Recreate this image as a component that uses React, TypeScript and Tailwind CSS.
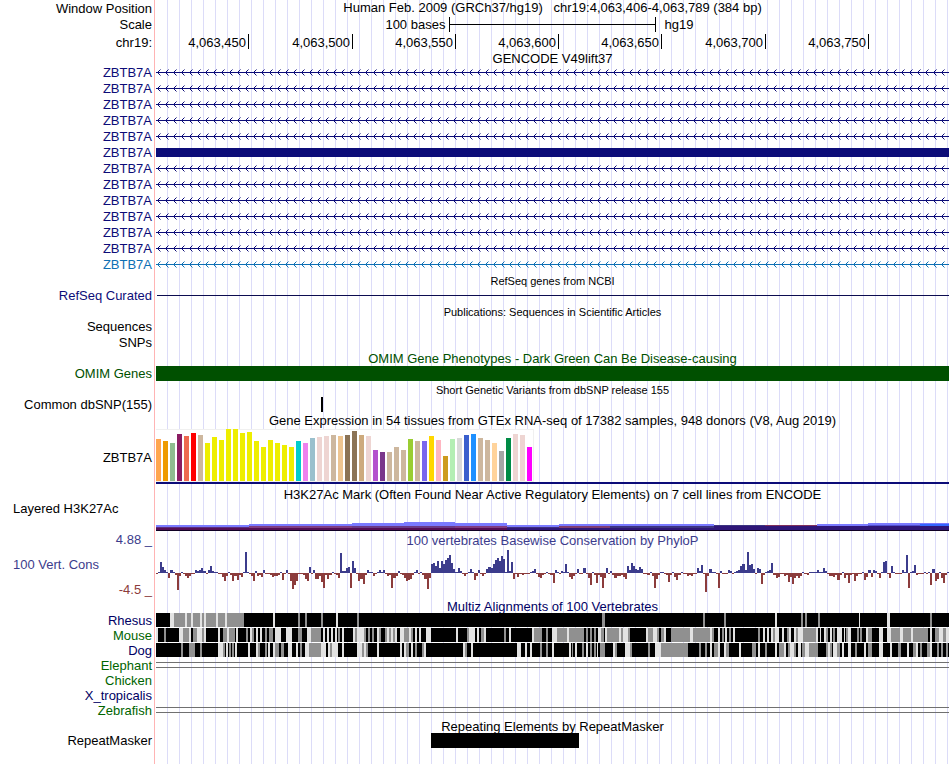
import type { ReactNode } from "react";

type Box = [x: number, y: number, w: number, h: number, color: string];

const PLOT_WIDTH = 793;
const NAVY = "#0c0c78";

const genes = [
  ...Array.from({ length: 5 }, () => ({ kind: "intron", color: NAVY })),
  { kind: "exon", color: NAVY },
  ...Array.from({ length: 6 }, () => ({ kind: "intron", color: NAVY })),
  { kind: "intron", color: "#0e70b4" },
];

const ticks = ["4,063,450", "4,063,500", "4,063,550", "4,063,600", "4,063,650", "4,063,700", "4,063,750"];

const TAN = "#cdb79e";
const YELLOW = "#eeee00";
const ROSE = "#eed5d2";

const tissues: [number, string][] = [
  [42, "#ffa54f"], [40, "#ee9a00"], [38, "#8fbc8f"], [47, "#8b1c62"], [45, "#ee6a50"], [48, "#ff0000"], [46, TAN],
  [38, YELLOW], [44, YELLOW], [41, YELLOW], [52, YELLOW], [52, YELLOW], [48, YELLOW], [49, YELLOW], [40, YELLOW],
  [34, YELLOW], [41, YELLOW], [38, YELLOW], [36, YELLOW], [34, YELLOW], [40, "#00cdcd"], [38, "#ee82ee"],
  [43, "#9ac0cd"], [44, ROSE], [45, ROSE], [46, TAN], [45, "#eec591"], [46, "#8b7355"], [50, "#8b7355"],
  [46, "#cdaa7d"], [45, ROSE], [31, "#b452cd"], [29, "#7a378b"], [29, TAN], [34, TAN], [31, TAN], [42, "#9acd32"],
  [40, TAN], [40, "#7a67ee"], [45, "#ffd700"], [41, "#ffb6c1"], [25, "#cd9b1d"], [42, "#b4eeb4"], [43, "#d9d9d9"],
  [46, "#3a5fcd"], [47, "#1e90ff"], [43, TAN], [41, TAN], [38, "#ffd39b"], [30, "#a6a6a6"], [43, "#008b45"],
  [47, ROSE], [46, ROSE], [34, "#ff00ff"],
];

const histone: Box[] = [
  [0, 3, 93, 3, "#7a7aff"],
  [93, 2, 103, 3, "#7a7aff"],
  [196, 1, 52, 4, "#7a7aff"],
  [248, 0, 51, 5, "#7a7aff"],
  [299, 1, 52, 4, "#7a7aff"],
  [351, 3, 52, 2, "#7a7aff"],
  [403, 2, 155, 2, "#7a7aff"],
  [661, 2, 51, 2, "#7a7aff"],
  [712, 1, 81, 2, "#7a7aff"],
  [0, 5, 93, 1, "#5c2d7c"],
  [93, 4, 103, 2, "#803c80"],
  [196, 4, 103, 2, "#6a3a86"],
  [299, 4, 52, 2, "#803c80"],
  [351, 5, 52, 1, "#40307c"],
  [403, 4, 51, 2, "#803c70"],
  [454, 4, 104, 2, "#3c3480"],
  [558, 3, 51, 2, "#3c3480"],
  [609, 3, 52, 1, "#80305c"],
  [661, 4, 51, 1, "#80305c"],
  [712, 3, 52, 2, "#5050d0"],
  [764, 2, 29, 2, "#3366ff"],
  [558, 4, 235, 2, "#2f1678"],
  [0, 6, 351, 2, "#540c54"],
  [351, 6, 442, 2, "#2f1678"],
  [0, 8, 793, 1, "#100024"],
];

const phyloP = [
  -1, 1, 11, 6, 3, 1, -5, 3, 1, -2, -17, -3, 1, -1, -3, -5, -3, -1, -1, 3, 2, 3, 5, 2, -1, 3, 7, 2, 1, 1, -1, -1,
  -4, -8, -3, 1, -2, -8, -3, -7, -2, -4, 1, 21, 1, -1, -3, -8, 2, -3, -2, -4, 3, -1, -1, -2, -4, -3, -3, -2, 1, -7,
  -1, 3, -1, -8, -16, -12, -8, -1, -1, -2, -6, -8, 6, -1, 3, -6, -6, -3, -9, -15, -2, -6, -2, 1, -1, -2, -5, 20, 2,
  2, 5, 6, -15, 12, 5, -1, -8, -6, -11, -2, 3, 1, 1, -3, -1, 1, 3, 1, 3, -1, -3, -2, -15, -5, -3, 2, -1, -2, -5,
  -8, -7, -6, -2, 1, 3, -1, 1, -2, -6, -16, -5, 9, 10, 7, 12, 5, 12, 9, 13, 15, 18, 10, 4, 1, 5, 2, -1, -3, -1, 1,
  4, 1, -7, -3, 3, -1, -3, -1, 4, 6, 5, 9, 13, 15, 12, 17, 14, 1, 23, 2, 11, -6, -1, -4, -1, -2, -1, -1, -1, 1, 2,
  4, -1, -4, -5, -2, -1, 1, -1, -2, -10, 3, 1, -1, 2, 1, 9, 1, -4, -6, -3, -1, 4, -1, -1, 5, -1, -5, -12, 1, -2,
  -10, -2, -4, -15, -5, 5, -1, 2, -2, -5, -3, -3, -2, -4, -6, 7, 3, 10, 7, 4, 3, 6, 4, -1, -1, -2, 1, -3, -15, -6,
  -2, 1, 1, -1, -2, -9, -2, 1, -4, -7, -2, 1, -1, -1, -3, -2, -3, -1, -1, 5, 2, 8, -1, -19, -3, 4, 1, 1, -1, -15,
  2, -1, -1, -1, 3, 2, -1, 1, 2, 3, 7, 9, 3, 21, 8, 9, 4, -1, 5, 4, -11, -2, 1, 2, 3, 10, -2, -5, -4, -1, -1, -3,
  -2, -9, -4, -11, -5, -3, -5, -3, 1, -1, -2, 1, 1, 1, 1, 3, 1, 1, 5, 2, -1, -3, -3, -4, -2, -7, -2, 1, -5, -2,
  -10, -2, -1, -8, -3, -1, -1, 1, -7, -4, 3, -4, 3, 2, -1, -5, 1, 11, 12, -1, -5, 7, 1, -1, -1, -1, 3, 1, 18, -15,
  1, 2, 8, -2, -1, -1, -1, 1, -1, 1, -12, 4, -8, -6, 1, -5, -10, -2, 1,
];

const K = "#000000";
const G = "#909090";
const L = "#e2e2e2";

type Run = [x: number, w: number, color: string];

const rhesus: Run[] = [
  [14, 4, L], [18, 70, G], [29, 2, L], [35, 2, L], [44, 2, L], [48, 2, L], [60, 2, L], [69, 2, L], [117, 2, L],
  [142, 2, G], [149, 2, G], [165, 2, G], [180, 2, L], [201, 2, G], [446, 3, G], [547, 2, G], [568, 2, G],
  [619, 2, L], [645, 2, G], [649, 2, G], [662, 2, G], [703, 1, L], [731, 3, L], [774, 2, G],
];

const mouse: Run[] = [
  [0, 2, L], [8, 2, G], [23, 4, L], [27, 6, G], [33, 2, L], [37, 4, G], [41, 5, L], [46, 2, G], [48, 2, L],
  [62, 2, L], [67, 4, G], [71, 2, L], [73, 6, G], [80, 2, L], [90, 2, G], [94, 2, L], [96, 2, G], [100, 2, L],
  [104, 2, L], [109, 2, G], [113, 4, G], [119, 6, L], [130, 6, L], [142, 4, G], [151, 4, L], [155, 10, G],
  [167, 2, L], [171, 2, L], [175, 2, L], [179, 2, L], [182, 2, G], [186, 2, L], [197, 2, L], [199, 2, G],
  [201, 7, L], [208, 2, G], [212, 2, G], [216, 2, G], [221, 2, L], [223, 2, G], [229, 2, G], [231, 2, L],
  [233, 2, G], [235, 2, L], [237, 2, G], [239, 2, L], [244, 4, L], [248, 5, G], [253, 2, L], [255, 2, G],
  [259, 2, L], [263, 2, L], [270, 5, L], [300, 2, L], [311, 2, G], [313, 6, L], [321, 2, L], [325, 3, G],
  [328, 2, L], [348, 2, G], [353, 2, L], [376, 2, L], [378, 8, G], [390, 2, G], [396, 5, L], [401, 10, G],
  [411, 2, L], [413, 15, G], [430, 2, G], [434, 2, G], [438, 2, G], [442, 3, L], [445, 3, G], [449, 2, L],
  [451, 12, G], [463, 2, L], [465, 2, G], [467, 5, L], [472, 2, G], [490, 2, L], [492, 5, G], [497, 4, L],
  [501, 2, G], [505, 3, G], [508, 2, L], [515, 19, G], [534, 3, L], [537, 17, G], [554, 2, L], [556, 2, G],
  [562, 2, L], [566, 2, G], [569, 2, L], [573, 2, G], [577, 2, L], [602, 2, G], [607, 2, L], [611, 2, L],
  [615, 2, L], [617, 2, G], [619, 4, L], [626, 2, L], [631, 2, G], [633, 2, L], [638, 2, L], [640, 2, G],
  [642, 5, L], [647, 13, G], [660, 2, L], [664, 1, L], [668, 2, L], [670, 2, G], [674, 2, L], [677, 2, G],
  [681, 5, L], [688, 1, L], [690, 2, G], [692, 3, L], [701, 2, G], [704, 2, G], [710, 2, L], [712, 4, G],
  [723, 4, L], [731, 4, L], [735, 9, G], [744, 3, L], [747, 8, G], [755, 2, L], [757, 15, G], [774, 2, L],
  [779, 4, G], [783, 4, L], [787, 3, G], [790, 3, L],
];

const dog: Run[] = [
  [25, 2, G], [33, 6, G], [44, 2, G], [62, 5, L], [67, 2, G], [70, 2, L], [73, 2, G], [76, 2, G], [79, 2, L],
  [92, 2, L], [100, 2, L], [102, 2, G], [109, 2, G], [112, 2, L], [117, 2, L], [119, 4, G], [125, 3, G],
  [132, 4, L], [140, 2, L], [144, 2, G], [149, 4, L], [153, 12, G], [165, 5, L], [172, 2, L], [174, 2, G],
  [176, 6, L], [186, 2, L], [201, 5, L], [206, 2, G], [208, 2, L], [210, 2, G], [221, 2, L], [244, 2, L],
  [248, 2, L], [250, 3, G], [255, 2, L], [259, 2, G], [266, 2, G], [268, 2, L], [307, 2, L], [309, 2, G],
  [315, 2, L], [361, 4, L], [369, 2, L], [374, 2, L], [384, 2, G], [390, 2, G], [396, 2, L], [413, 2, L],
  [416, 1, G], [419, 2, L], [426, 2, G], [430, 2, L], [434, 2, G], [438, 2, G], [441, 1, L], [444, 2, G],
  [446, 3, G], [457, 2, L], [459, 2, G], [469, 5, L], [474, 2, G], [492, 2, G], [499, 6, L], [505, 27, G],
  [543, 2, G], [549, 2, G], [554, 2, L], [558, 4, G], [562, 2, L], [568, 2, L], [570, 3, G], [583, 2, L],
  [596, 4, G], [602, 2, L], [609, 2, G], [619, 2, L], [623, 5, G], [628, 2, L], [632, 2, G], [634, 4, L],
  [638, 2, G], [642, 3, L], [646, 3, G], [649, 4, L], [653, 9, G], [670, 2, G], [672, 2, L], [674, 2, G],
  [677, 4, L], [681, 3, G], [686, 2, L], [692, 3, L], [699, 2, G], [708, 2, L], [712, 4, G], [723, 4, L],
  [734, 2, L], [742, 3, G], [751, 2, L], [757, 3, G], [760, 2, L], [764, 2, G], [771, 3, G], [774, 2, L],
  [781, 2, G], [785, 2, G], [790, 2, G],
];

const species: { name: string; tone: string; runs?: Run[]; bridge?: boolean }[] = [
  { name: "Rhesus", tone: "text-[#000064]", runs: rhesus },
  { name: "Mouse", tone: "text-[#006400]", runs: mouse },
  { name: "Dog", tone: "text-[#000064]", runs: dog },
  { name: "Elephant", tone: "text-[#006400]", bridge: true },
  { name: "Chicken", tone: "text-[#006400]" },
  { name: "X_tropicalis", tone: "text-[#000064]" },
  { name: "Zebrafish", tone: "text-[#006400]", bridge: true },
];

function Row({ label, className, children }: { label?: ReactNode; className: string; children?: ReactNode }) {
  return (
    <div className={`flex ${className}`}>
      <div className="w-[154px] shrink-0 pr-0.5 text-right whitespace-nowrap">{label}</div>
      <div className="min-w-0 flex-1 border-l border-[#ffb4b4] bg-[repeating-linear-gradient(to_right,transparent_0_11px,#dcdcf8_11px_12px)] bg-clip-content bg-origin-content px-px">
        {children}
      </div>
    </div>
  );
}

function Title({ children, small, tone = "text-black" }: { children: ReactNode; small?: boolean; tone?: string }) {
  return (
    <h2 className={`text-center whitespace-pre ${small ? "text-[11px]" : "text-[13px]"} ${tone}`}>{children}</h2>
  );
}

function Plot({ height, boxes }: { height: number; boxes: Box[] }) {
  return (
    <svg
      className="block w-full"
      height={height}
      viewBox={`0 0 ${PLOT_WIDTH} ${height}`}
      preserveAspectRatio="none"
      shapeRendering="crispEdges"
      aria-hidden="true"
    >
      {boxes.map(([x, y, w, h, color], i) => (
        <rect key={i} x={x} y={y} width={w} height={h} fill={color} />
      ))}
    </svg>
  );
}

function Intron({ id, color }: { id: string; color: string }) {
  return (
    <svg className="block h-4 w-full" shapeRendering="crispEdges" aria-hidden="true">
      <defs>
        <pattern id={id} width="8" height="16" patternUnits="userSpaceOnUse">
          <g fill={color}>
            <rect x="0" y="8" width="8" height="1" />
            <rect x="2" y="7" width="1" height="3" />
            <rect x="3" y="6" width="1" height="1" />
            <rect x="3" y="10" width="1" height="1" />
            <rect x="4" y="5" width="1" height="1" opacity="0.5" />
            <rect x="4" y="11" width="1" height="1" opacity="0.5" />
          </g>
        </pattern>
      </defs>
      <rect width="100%" height="16" fill={`url(#${id})`} />
    </svg>
  );
}

const BASE = PLOT_WIDTH / phyloP.length;

const phyloBoxes: Box[] = phyloP.map((v, i) => {
  const start = Math.round(i * BASE);
  const width = Math.round((i + 1) * BASE) - start;
  return v > 0 ? [start, 24 - v, width, v, "#3c3c8c"] : [start, 24, width, -v, "#8c3c3c"];
});

export default function App() {
  return (
    <main className="bg-white font-['Liberation_Sans',Arial,sans-serif] text-[13px] leading-4 text-black">
      <Row className="h-4" label={<div className="leading-[18px]">Window Position</div>}>
        <Title>{"Human Feb. 2009 (GRCh37/hg19)   chr19:4,063,406-4,063,789 (384 bp)"}</Title>
      </Row>
      <Row className="h-[18px]" label={<div className="leading-[18px]">Scale</div>}>
        <div className="flex pt-px">
          <span className="w-[37%] pr-1 text-right">100 bases</span>
          <span className="flex h-[15px] w-[26%] items-center border-x border-black">
            <span className="h-px w-full bg-black" />
          </span>
          <span className="pl-[9px]">hg19</span>
        </div>
      </Row>
      <Row className="h-4 leading-[18px]" label="chr19:">
        <div className="grid grid-cols-[93fr_104fr_103fr_103fr_103fr_104fr_103fr_80fr]">
          {ticks.map((t) => (
            <span key={t} className="h-[15px] border-r border-black pr-0.5 text-right">
              {t}
            </span>
          ))}
        </div>
      </Row>
      <Row className="h-[14px] leading-[18px]">
        <Title>GENCODE V49lift37</Title>
      </Row>
      {genes.map((g, i) => (
        <Row
          key={i}
          className="h-4 leading-[18px]"
          label={<span className={i === 12 ? "text-[#0e70b4]" : "text-[#0c0c78]"}>ZBTB7A</span>}
        >
          {g.kind === "exon" ? (
            <div className="pt-1">
              <div className="h-[9px] bg-[#0c0c78]" />
            </div>
          ) : (
            <Intron id={`intron-${i}`} color={g.color} />
          )}
        </Row>
      ))}

      <Row className="h-4 leading-[18px]">
        <Title small>RefSeq genes from NCBI</Title>
      </Row>
      <Row className="h-4" label={<span className="text-[#0c0c78]">RefSeq Curated</span>}>
        <div className="pt-[7px] pl-px">
          <div className="h-px bg-[#0c0c50]" />
        </div>
      </Row>

      <Row className="h-[14px]">
        <Title small>Publications: Sequences in Scientific Articles</Title>
      </Row>
      <Row className="h-4 leading-[18px]" label="Sequences" />
      <Row className="h-4 leading-[18px]" label="SNPs" />

      <Row className="h-4 leading-[18px]">
        <Title tone="text-[#005000]">OMIM Gene Phenotypes - Dark Green Can Be Disease-causing</Title>
      </Row>
      <Row className="h-[15px]" label={<span className="text-[#005000]">OMIM Genes</span>}>
        <div className="h-full bg-[#005000]" />
      </Row>

      <Row className="h-4 leading-[18px]">
        <Title small>Short Genetic Variants from dbSNP release 155</Title>
      </Row>
      <Row className="h-[15px]" label="Common dbSNP(155)">
        <Plot height={15} boxes={[[165, 0, 2, 15, K]]} />
      </Row>

      <Row className="h-[17px] leading-[18px]">
        <Title>Gene Expression in 54 tissues from GTEx RNA-seq of 17382 samples, 948 donors (V8, Aug 2019)</Title>
      </Row>
      <Row className="h-[57px]" label={<div className="pt-5 leading-[18px]">ZBTB7A</div>}>
        <Plot
          height={55}
          boxes={[
            [0, 0, 378, 53, "#f0f0f0"],
            [0, 1, 377, 51, "#ffffff"],
            ...tissues.map(([h, color], i): Box => [i * 7, 52 - h, 5, h, color]),
            [0, 53, PLOT_WIDTH, 2, NAVY],
          ]}
        />
      </Row>

      <Row className="h-4 leading-[18px]">
        <Title>H3K27Ac Mark (Often Found Near Active Regulatory Elements) on 7 cell lines from ENCODE</Title>
      </Row>
      <Row className="h-[30px]" label={<div className="pl-[13px] text-left leading-[14px]">Layered H3K27Ac</div>}>
        <div className="pt-5">
          <Plot height={9} boxes={histone} />
        </div>
      </Row>

      <Row className="h-[17px] leading-[18px]" label={<div className="leading-4 text-[#3c3c8c]">4.88 _</div>}>
        <Title tone="text-[#3c3c8c]">100 vertebrates Basewise Conservation by PhyloP</Title>
      </Row>
      <Row
        className="h-[49px]"
        label={
          <div className="flex h-full flex-col justify-between pt-2">
            <span className="pl-[13px] text-left text-[#3c3c8c]">100 Vert. Cons</span>
            <span className="text-[#8c3c3c]">-4.5 _</span>
          </div>
        }
      >
        <Plot height={49} boxes={phyloBoxes} />
      </Row>

      <Row className="h-[15px] leading-[18px]">
        <Title tone="text-[#000064]">Multiz Alignments of 100 Vertebrates</Title>
      </Row>
      {species.map((s) => (
        <Row key={s.name} className="h-[15px]" label={<span className={s.tone}>{s.name}</span>}>
          {s.runs && (
            <Plot
              height={14}
              boxes={[[0, 0, PLOT_WIDTH, 14, K], ...s.runs.map(([x, w, color]): Box => [x, 0, w, 14, color])]}
            />
          )}
          {s.bridge && (
            <div className="pt-1">
              <div className="h-1.5 border-y border-[#707070]" />
            </div>
          )}
        </Row>
      ))}

      <Row className="h-[15px] leading-[18px]">
        <Title>Repeating Elements by RepeatMasker</Title>
      </Row>
      <Row className="h-[31px]" label="RepeatMasker">
        <Plot height={15} boxes={[[275, 0, 148, 15, K]]} />
      </Row>
    </main>
  );
}
